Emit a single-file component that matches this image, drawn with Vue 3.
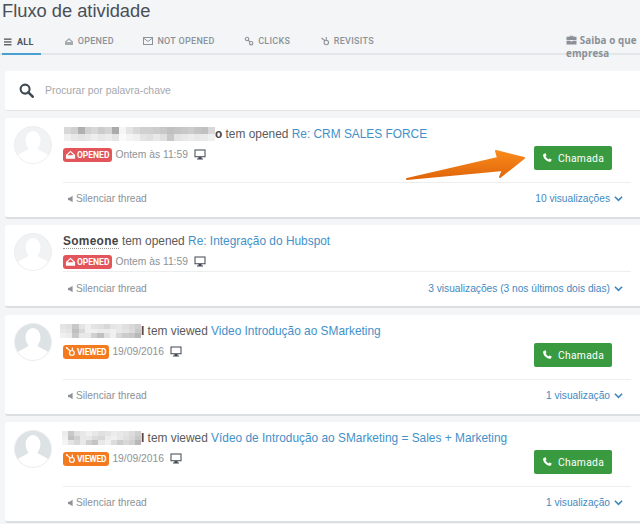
<script setup>
const tabs = [
  { label: 'ALL', icon: 'menu', active: true },
  { label: 'OPENED', icon: 'open' },
  { label: 'NOT OPENED', icon: 'mail' },
  { label: 'CLICKS', icon: 'link' },
  { label: 'REVISITS', icon: 'hub' }
]
function grid(rows) {
  const cells = rows.flatMap(r => r.split(' ').map(v => '#' + v + v + v))
  return { cells, cols: rows[0].split(' ').length, rows: rows.length }
}
const cards = [
  {
    id: 1, pad: 'tall', faded: true, w: 151, shift: 1, tail: 'o', verb: ' tem opened ', link: 'Re: CRM SALES FORCE', kind: 'opened', date: 'Ontem às 11:59', views: '10 visualizações', call: true,
    blur: grid([
      'd8 d0 b0 d0 d8 cc d4 aa f5 e4 d8 d0 d0 cc c8 c0 c4 c8 cc c4 c0 d8',
      'f0 e8 e4 e8 ee e8 ec e4 fa f4 f0 e4 e0 e8 e0 c8 e4 e8 ec e8 ea f0'
    ])
  },
  { id: 2, pad: 'short', faded: true, name: 'Someone', verb: ' tem opened ', link: 'Re: Integração do Hubspot', kind: 'opened', date: 'Ontem às 11:59', views: '3 visualizações (3 nos últimos dois dias)' },
  {
    id: 3, pad: 'tall', w: 81, shift: -3, tail: 'l', verb: ' tem viewed ', link: 'Video Introdução ao SMarketing', kind: 'viewed', date: '19/09/2016', views: '1 visualização', call: true,
    blur: grid([
      'e4 e0 c8 e4 f0 e4 e0 d8 e4 e8 e0 d8 d0',
      'e8 e4 c0 d8 f0 f0 ec ec f0 e8 e4 dc c8',
      'f0 ec c8 e8 e8 d0 c0 e0 f0 d8 cc c8 b8'
    ])
  },
  {
    id: 4, pad: 'tall', w: 79, shift: -1, tail: 'l', verb: ' tem viewed ', link: 'Vídeo de Introdução ao SMarketing = Sales + Marketing', kind: 'viewed', date: '19/09/2016', views: '1 visualização', call: true,
    blur: grid([
      'ec c8 e0 e8 f0 e8 e0 e4 ec e8 e4 dc d0',
      'f0 c0 d0 e8 e8 dc d8 ec f0 e8 e0 d8 c8',
      'f4 e4 d8 e8 d0 c4 e8 f0 dc cc d8 d0 b8'
    ])
  }
]
</script>

<template>
  <div class="page">
    <h1 class="title">Fluxo de atividade</h1>

    <div class="tabbar">
      <div v-for="t in tabs" :key="t.label" class="tab" :class="{ active: t.active }">
        <svg class="tab-icon" viewBox="0 0 10 10" width="10" height="10">
          <g v-if="t.icon === 'menu'" fill="#555">
            <rect x="1" y="1.500" width="7.500" height="1.300" /><rect x="1" y="4.300" width="7.500" height="1.300" /><rect x="1" y="7.100" width="7.500" height="1.300" />
          </g>
          <path v-else-if="t.icon === 'open'" d="M1 5.500 5 2l4 3.500V9H1Z M2.600 6h4.800L5 3.800Z" fill="#a5abb0" fill-rule="evenodd" />
          <g v-else-if="t.icon === 'mail'" fill="none" stroke="#8d9399" stroke-width="1">
            <rect x=".5" y="1.500" width="9" height="7" /><path d="M.5 2l4.500 3.500L9.500 2" />
          </g>
          <g v-else-if="t.icon === 'link'" fill="none" stroke="#8d9399" stroke-width="1.100">
            <circle cx="3" cy="3" r="1.700" /><circle cx="7.200" cy="7.200" r="1.700" /><path d="M4.200 4.200l1.800 1.800" />
          </g>
          <g v-else fill="none" stroke="#8d9399" stroke-width="1.100">
            <circle cx="6.300" cy="6.500" r="2.200" /><path d="M5 4.800 1.500 2M6.300 4.300V1" />
          </g>
        </svg>
        <span>{{ t.label }}</span>
      </div>
      <div class="learn">
        <svg viewBox="0 0 12 11" width="11" height="10" class="case"><path d="M4 2V.8h4V2h3.500v3.500h-11V2ZM5 2h2v-.400H5ZM.5 6.200h4.500v1h2v-1h4.500V10.500H.5Z" fill="#8a9096" fill-rule="evenodd" /></svg>
        Saiba o que<br />empresa
      </div>
    </div>

    <div class="search">
      <svg viewBox="0 0 16 16" width="15" height="15"><circle cx="6.500" cy="6.500" r="4.800" fill="none" stroke="#3f4a54" stroke-width="2.200" /><path d="M10 10l4.600 4.600" stroke="#3f4a54" stroke-width="2.800" stroke-linecap="round" /></svg>
      <span>Procurar por palavra-chave</span>
    </div>

    <div v-for="c in cards" :key="c.id" class="card" :class="c.pad">
      <div class="avatar" :class="{ faded: c.faded }">
        <svg viewBox="0 0 38 38" width="38" height="38">
          <ellipse cx="19" cy="14.500" rx="7.500" ry="9.500" fill="#fff" />
          <path d="M15 21c0 4-9 5-12 9 3 5 10 8 16 8s13-3 16-8c-3-4-12-5-12-9Z" fill="#fff" />
        </svg>
      </div>
      <div class="main">
        <div class="headline">
          <span
            v-if="c.blur"
            class="blur"
            :style="{
              width: c.w + 'px',
              marginLeft: c.shift + 'px',
              gridTemplateColumns: `repeat(${c.blur.cols}, 1fr)`,
              gridTemplateRows: `repeat(${c.blur.rows}, 1fr)`
            }"
          >
            <i v-for="(s, i) in c.blur.cells" :key="i" :style="{ background: s }"></i>
          </span>
          <b :class="{ person: c.name }">{{ c.name || c.tail }}</b><span>{{ c.verb }}</span><a>{{ c.link }}</a>
        </div>
        <div class="meta">
          <span class="badge" :class="c.kind">
            <svg v-if="c.kind === 'opened'" viewBox="0 0 12 12" width="11" height="11"><path d="M1 6.500 6 1.800l5 4.700V10.500H1Z M2.700 6.700h6.600L6 3.600Z" fill="#fff" fill-rule="evenodd" /></svg>
            <svg v-else viewBox="0 0 12 12" width="11" height="11"><g fill="none" stroke="#fff" stroke-width="1.300"><circle cx="7.500" cy="7.500" r="2.600" /><path d="M5.800 5.400 2 2.300M8 5V1.500" /></g><circle cx="2" cy="2" r="1" fill="#fff" /></svg>
            {{ c.kind.toUpperCase() }}
          </span>
          <span class="date">{{ c.date }}</span>
          <svg viewBox="0 0 12 11" width="12" height="11" class="monitor"><path d="M.5.500h11v7.700h-4v1.300h1.500v1H3v-1h1.500V8.200h-4Zm1 1v5.700h9V1.500Z" fill="#3f4650" fill-rule="evenodd" /></svg>
        </div>
        <button v-if="c.call" class="call">
          <svg viewBox="0 0 12 12" width="10" height="10"><path d="M2.700.8 4.400.4l1 2.600-1.200 1a7 7 0 0 0 3.700 3.700l1-1.200 2.600 1-.4 1.800c-.2.800-1 1.500-1.900 1.300C5 10 1.900 6.900 1.300 2.800 1.200 1.800 1.900 1 2.700.8Z" fill="#fff" /></svg>
          Chamada
        </button>
        <div class="foot">
          <span class="mute">
            <svg viewBox="0 0 6 8" width="5" height="8"><path d="M0 2.500h2L5.500 0v8L2 5.500H0Z" fill="#8b9197" /></svg>
            Silenciar thread
          </span>
          <span class="views">
            {{ c.views }}
            <svg viewBox="0 0 10 7" width="9" height="7"><path d="M1 1.500l4 4 4-4" fill="none" stroke="#3f86bd" stroke-width="1.800" /></svg>
          </span>
        </div>
      </div>
    </div>

    <svg class="arrow" viewBox="0 0 130 42" width="130" height="42">
      <defs><linearGradient id="arrowFill" x1="0" x2="0" y1="0" y2="1"><stop offset="0" stop-color="#f98a1c" /><stop offset="1" stop-color="#e0660a" /></linearGradient></defs>
      <path d="M2 34 93 13 91 6 119 13 95 32 98 25Z" fill="url(#arrowFill)" stroke="url(#arrowFill)" stroke-width="2" stroke-linejoin="round" />
    </svg>
  </div>
</template>

<style>
html, body { margin: 0; background: #f3f5f7; }
</style>

<style scoped>
.page {
  position: relative;
  box-sizing: border-box;
  width: 640px;
  height: 524px;
  overflow: hidden;
  background: #f3f5f7;
  font-family: "Liberation Sans", Arial, sans-serif;
  color: #555;
}
.title {
  margin: 0;
  padding-left: 2px;
  height: 28px;
  font-size: 18.300px;
  line-height: 21px;
  font-weight: 400;
  color: #4a4f55;
}
.tabbar {
  display: flex;
  height: 25px;
  border-bottom: 2px solid #e3e7ea;
  margin-bottom: 16px;
  position: relative;
}
.tab {
  display: flex;
  align-items: center;
  gap: 4px;
  height: 25px;
  box-sizing: border-box;
  margin-right: 29.500px;
  font-family: Roboto, sans-serif;
  font-size: 9px;
  font-weight: 500;
  letter-spacing: .3px;
  color: #8c9298;
}
.tab.active {
  margin: 0 23px 0 2px;
  padding: 2px 7px 0 1px;
  height: 27px;
  color: #4d5359;
  font-weight: 700;
  border-bottom: 2px solid #4a9fd0;
}
.tab-icon { flex: none; }
.learn {
  position: absolute;
  left: 566px;
  top: 6px;
  width: 74px;
  white-space: nowrap;
  font-family: "Open Sans", sans-serif;
  font-size: 9.800px;
  font-weight: 700;
  line-height: 13px;
  letter-spacing: .1px;
  color: #8a9096;
}
.case { vertical-align: -1px; }
.search {
  display: flex;
  align-items: center;
  gap: 11px;
  height: 39px;
  margin: 0 0 7px 5px;
  padding-left: 14px;
  background: #fff;
  border-bottom: 1px solid #e2e4e6;
  border-radius: 3px 0 0 3px;
  font-size: 10.400px;
  color: #a5a9ad;
}
.card {
  display: flex;
  box-sizing: border-box;
  margin: 0 0 6px 5px;
  padding: 9px 14px 0 9px;
  background: #fff;
  border-bottom: 2px solid #dcdfe2;
  border-radius: 3px 0 0 3px;
}
.card.tall { height: 101px; }
.card.short { height: 83px; margin-bottom: 7px; }
.avatar {
  flex: none;
  box-sizing: border-box;
  width: 38px;
  height: 38px;
  margin: -1px 11px 0 0;
  border-radius: 50%;
  background: #dde2e5;
  border: 1px solid #eceeef;
  overflow: hidden;
}
.avatar svg { display: block; margin: -1px; }
.avatar.faded { background: #f1f2f3; }
.main { position: relative; flex: 1; min-width: 0; }
.headline {
  display: flex;
  align-items: center;
  height: 14px;
  font-size: 11.900px;
  line-height: 14px;
  white-space: pre;
  color: #5a5a5a;
}
.headline b { color: #444; }
.headline b.person { letter-spacing: .3px; border-bottom: 1px dotted #999; height: 14px; }
.blur { display: grid; flex: none; height: 14px; filter: blur(.5px); }
.headline a { color: #4391c8; }
.meta { display: flex; align-items: center; gap: 3px; margin-top: 6.500px; height: 14px; }
.badge {
  display: inline-flex;
  align-items: center;
  gap: 1px;
  height: 14px;
  padding: 0 3px 0 2px;
  border-radius: 3px;
  font-family: Roboto, sans-serif;
  font-size: 8.500px;
  font-weight: 700;
  color: #fff;
}
.badge.opened { background: #e2555a; }
.badge.viewed { background: #f47a1f; letter-spacing: -.2px; }
.date { font-size: 10.300px; color: #8e9296; }
.monitor { margin-left: 3px; }
.call {
  position: absolute;
  right: 14px;
  top: 19px;
  display: flex;
  align-items: center;
  justify-content: center;
  gap: 6px;
  width: 78px;
  height: 24px;
  padding: 0;
  border: 0;
  border-radius: 2px;
  background: #3a9a3f;
  color: #fff;
  font-family: Roboto, sans-serif;
  font-size: 10.300px;
  font-weight: 400;
  letter-spacing: .3px;
}
.foot {
  position: absolute;
  left: 0;
  right: -5px;
  top: 55px;
  display: flex;
  justify-content: space-between;
  align-items: center;
  height: 31px;
  padding: 0 8px 0 5px;
  border-top: 1px solid #eceeef;
  font-size: 10.200px;
}
.short .foot { top: 37px; height: 33px; }
.mute { display: flex; align-items: center; gap: 3px; color: #8b9197; }
.views { display: flex; align-items: center; gap: 4px; color: #4389bf; }
.arrow { position: absolute; left: 405px; top: 145px; }
</style>
